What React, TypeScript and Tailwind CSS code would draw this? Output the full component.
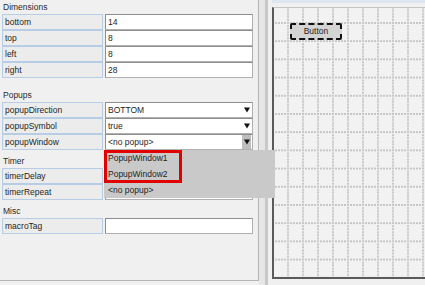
const sections = [
  {
    title: "Dimensions",
    gap: "mt-0",
    rows: [
      { label: "bottom", value: "14" },
      { label: "top", value: "8" },
      { label: "left", value: "8" },
      { label: "right", value: "28" },
    ],
  },
  {
    title: "Popups",
    gap: "mt-[10px]",
    rows: [
      { label: "popupDirection", value: "BOTTOM", combo: 1 },
      { label: "popupSymbol", value: "true", combo: 1 },
      { label: "popupWindow", value: "<no popup>", combo: 2 },
    ],
  },
  {
    title: "Timer",
    gap: "mt-[4px]",
    rows: [
      { label: "timerDelay", value: "" },
      { label: "timerRepeat", value: "" },
    ],
  },
  {
    title: "Misc",
    gap: "mt-[4px]",
    rows: [{ label: "macroTag", value: "" }],
  },
];

const Arrow = ({ pressed }: { pressed?: boolean }) => (
  <div
    className={`flex w-[9px] items-center justify-center mr-[1px] ${
      pressed ? "bg-[#bdbdbd]" : ""
    }`}
  >
    <svg width="6" height="6" viewBox="0 0 6 6">
      <path d="M0 0.5H6L3 5.5Z" fill="#111" />
    </svg>
  </div>
);

const Row = ({
  label,
  value,
  combo,
}: {
  label: string;
  value: string;
  combo?: number;
}) => (
  <div className="flex h-[16px]">
    <div className="w-[101px] border border-[#b7cde6] bg-[#ececec] pl-[2px] leading-[14px]">
      {label}
    </div>
    <div className="ml-[2px] flex w-[148px] justify-between border border-[#8e8e8e] border-b-[#b0b0b0] border-r-[#b0b0b0] bg-white pl-[2px] leading-[14px]">
      <span>{value}</span>
      {combo && <Arrow pressed={combo === 2} />}
    </div>
  </div>
);

const App = () => {
  return (
    <div className="relative flex h-[285px] w-[425px] overflow-hidden bg-[#f0f0f0] font-['Liberation_Sans',Arial,sans-serif] text-[8.5px] text-[#1e1e1e]">
      {/* property sheet */}
      <div className="h-[281px] w-[259px] border-r border-b border-[#b5b5b5] pl-[2px]">
        {sections.map((s) => (
          <div key={s.title} className={s.gap}>
            <div className="h-[14px] pl-[1px] leading-[14px] text-[#2a2a2a]">
              {s.title}
            </div>
            {s.rows.map((r) => (
              <Row key={r.label} {...r} />
            ))}
          </div>
        ))}
      </div>

      {/* splitter */}
      <div className="h-full w-[6px] bg-[#e6e6e6]" />

      {/* designer */}
      <div className="flex h-full flex-1 flex-col border-l-[3px] border-[#c8c8c8] pl-[4px]">
        <div className="h-[3px] bg-[#dde6f0]" />
        <div className="relative mt-[4px] h-[272px] overflow-hidden border-l-2 border-b-2 border-t border-[#5a5a5a] border-t-[#c4c4c4] bg-[#f2f2f2]">
          <svg className="absolute inset-0 h-full w-full">
            <defs>
              <pattern
                id="grid"
                x="13"
                y="14"
                width="15"
                height="18.2"
                patternUnits="userSpaceOnUse"
              >
                <path
                  d="M1 0V18.2M0 1H15"
                  stroke="#c6c6c6"
                  strokeWidth="2"
                  strokeDasharray="2 1"
                  fill="none"
                />
              </pattern>
            </defs>
            <rect width="100%" height="100%" fill="url(#grid)" />
          </svg>
          <div className="absolute left-[16px] top-[15px] flex h-[17px] w-[52px] items-center justify-center rounded-[2px] border-2 border-dashed border-[#111] bg-[#d4d4d4] text-[8.5px]">
            Button
          </div>
        </div>
      </div>

      {/* open combo list */}
      <div className="absolute left-[104px] top-[150px] h-[48px] w-[171px] bg-[#c9c9c9] leading-[16px]">
        <div className="absolute left-0 top-0 h-[33px] w-[78px] border-[3px] border-[#e00000]" />
        <div className="pl-[4px]">PopupWindow1</div>
        <div className="pl-[4px]">PopupWindow2</div>
        <div className="pl-[4px]">&lt;no popup&gt;</div>
      </div>
    </div>
  );
};

export default App;
